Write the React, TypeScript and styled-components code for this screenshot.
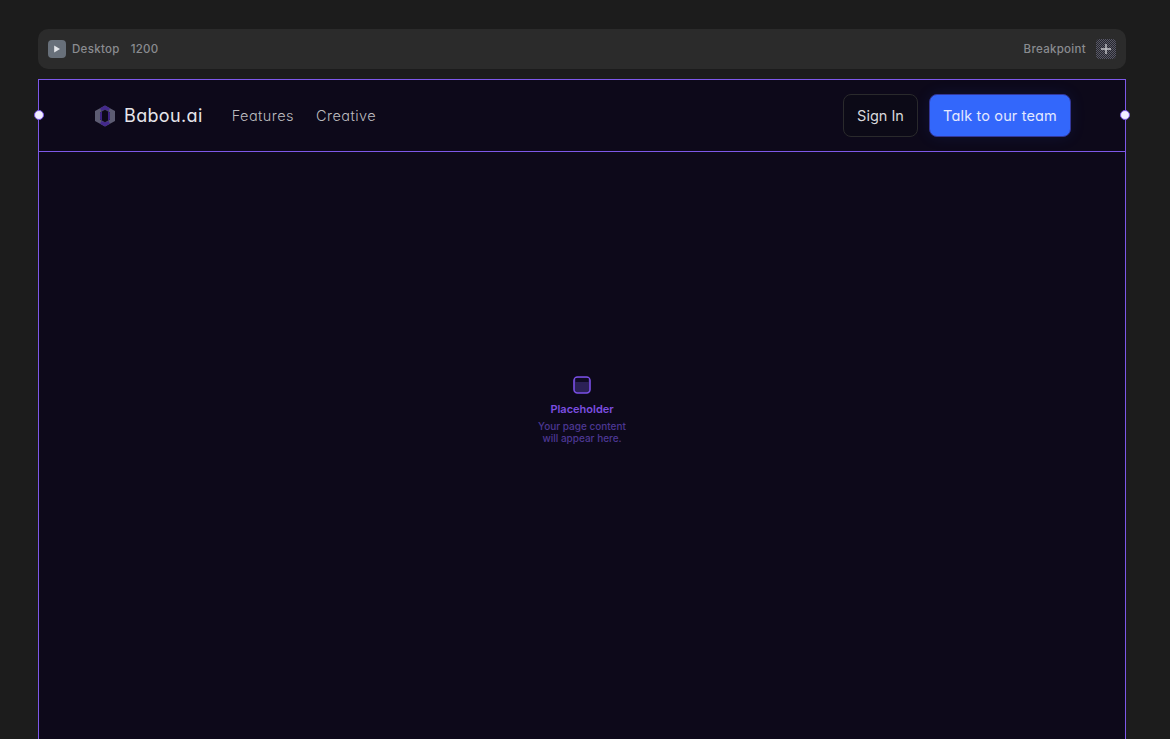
import React from 'react';
import styled, { createGlobalStyle } from 'styled-components';

const GlobalStyle = createGlobalStyle`
  html, body {
    margin: 0;
    height: 100%;
    overflow: hidden;
    background: #1c1c1c;
  }
  * {
    box-sizing: border-box;
  }
`;

const Page = styled.div`
  height: 739px;
  padding: 29px 44px 0 38px;
  display: flex;
  flex-direction: column;
  gap: 10px;
  overflow: hidden;
  font-family: Inter, 'Liberation Sans', sans-serif;
`;

const Toolbar = styled.div`
  flex: none;
  height: 40px;
  padding: 0 10px;
  display: flex;
  align-items: center;
  justify-content: space-between;
  background: #2b2b2b;
  border-radius: 10px;
`;

const ToolbarGroup = styled.div`
  display: flex;
  align-items: center;
`;

const PlayButton = styled.div`
  width: 18px;
  height: 18px;
  margin-right: 6px;
  display: flex;
  align-items: center;
  justify-content: center;
  background: #68707a;
  border-radius: 4px;
`;

const ToolbarLabel = styled.span<{ $gap?: number }>`
  margin-right: ${({ $gap }) => $gap ?? 0}px;
  font-size: 11.5px;
  font-weight: 500;
  letter-spacing: 0.3px;
  line-height: 14px;
  color: #8a8c90;
`;

const AddButton = styled.div`
  width: 20px;
  height: 20px;
  margin-left: 10px;
  display: flex;
  align-items: center;
  justify-content: center;
  border-radius: 4px;
  background: repeating-conic-gradient(#5a5a66 0 25%, #26262e 0 50%) 0 0 / 2px 2px;
`;

const Frame = styled.div`
  position: relative;
  flex: 1;
  display: flex;
  flex-direction: column;
  background: #0d091a;
  border: 1px solid #7d58e8;
  border-bottom: 0;
`;

const Handle = styled.span<{ $side: 'left' | 'right' }>`
  position: absolute;
  top: 30px;
  ${({ $side }) => ($side === 'left' ? 'left: -5.5px;' : 'right: -4.5px;')}
  width: 10px;
  height: 10px;
  background: #f1eeff;
  border: 1.5px solid #7d58e8;
  border-radius: 50%;
`;

const Nav = styled.header`
  flex: none;
  height: 72px;
  padding: 0 54px 0 55px;
  display: flex;
  align-items: center;
  justify-content: space-between;
  border-bottom: 1px solid #7d58e8;
  font-feature-settings: 'cv11' 1;
`;

const NavLeft = styled.div`
  display: flex;
  align-items: center;
`;

const Brand = styled.div`
  display: flex;
  align-items: center;
  gap: 8px;
  margin-right: 29px;
  font-size: 18px;
  font-weight: 400;
  letter-spacing: 0.35px;
  color: #e6e5ea;
`;

const NavLink = styled.a`
  margin-right: 22px;
  font-size: 14.5px;
  font-weight: 300;
  letter-spacing: 0.45px;
  color: #bcbbbf;
`;

const NavRight = styled.div`
  display: flex;
  align-items: center;
  gap: 11px;
  padding-bottom: 1px;
`;

const Button = styled.button<{ $primary?: boolean }>`
  width: ${({ $primary }) => ($primary ? 142 : 75)}px;
  height: 43px;
  padding: 0;
  font-family: Inter, 'Liberation Sans', sans-serif;
  font-feature-settings: 'cv11' 1;
  font-size: 14.5px;
  font-weight: 400;
  letter-spacing: ${({ $primary }) => ($primary ? 0.15 : 0)}px;
  color: ${({ $primary }) => ($primary ? '#e4e9ff' : '#d9d8dc')};
  background: ${({ $primary }) => ($primary ? '#3367fb' : '#0c0a17')};
  border: 1px solid ${({ $primary }) => ($primary ? '#33379a' : '#2a2a2c')};
  border-radius: 8px;
  box-shadow: ${({ $primary }) => ($primary ? '0 0 16px rgba(51, 103, 251, 0.1)' : 'none')};
`;

const Main = styled.main`
  flex: 1;
  padding-top: 224px;
  display: flex;
  flex-direction: column;
  align-items: center;
`;

const PlaceholderIcon = styled.div`
  margin-bottom: 8px;
  height: 18px;
`;

const PlaceholderTitle = styled.div`
  margin-bottom: 4px;
  font-size: 11px;
  font-weight: 600;
  line-height: 14px;
  color: #7c4ee0;
`;

const PlaceholderText = styled.div`
  font-size: 10px;
  font-weight: 500;
  line-height: 12px;
  text-align: center;
  color: #4c3792;
`;

const App: React.FC = () => {
  return (
    <>
      <GlobalStyle />
      <Page>
        <Toolbar>
          <ToolbarGroup>
            <PlayButton>
              <svg width="8" height="8" viewBox="0 0 8 8">
                <path d="M1.2 0.6 L7 4 L1.2 7.4 Z" fill="#e4e6ea" />
              </svg>
            </PlayButton>
            <ToolbarLabel $gap={11}>Desktop</ToolbarLabel>
            <ToolbarLabel>1200</ToolbarLabel>
          </ToolbarGroup>
          <ToolbarGroup>
            <ToolbarLabel>Breakpoint</ToolbarLabel>
            <AddButton>
              <svg width="12" height="12" viewBox="0 0 12 12">
                <path d="M6 1 V11 M1 6 H11" stroke="#c4c4c8" strokeWidth="1.4" />
              </svg>
            </AddButton>
          </ToolbarGroup>
        </Toolbar>
        <Frame>
          <Handle $side="left" />
          <Handle $side="right" />
          <Nav>
            <NavLeft>
              <Brand>
                <svg width="22" height="22" viewBox="0 0 22 22">
                  <path d="M11 0.5 L21 6 V16 L11 21.5 L1 16 V6 Z" fill="#5c5c72" />
                  <path d="M6 3.2 L11 0.5 L16 3.2 L14.5 6 L11 4.8 L7.5 6 Z M6 18.8 L7.5 16 L11 17.2 L14.5 16 L16 18.8 L11 21.5 Z" fill="#43298c" />
                  <path d="M11 4.8 L16 7.5 V14.5 L11 17.2 L6 14.5 V7.5 Z" fill="#0d091a" />
                  <path d="M8 6.4 V15.6 L6 14.5 V7.5 Z M14 6.4 V15.6 L16 14.5 V7.5 Z" fill="#3d2382" />
                </svg>
                Babou.ai
              </Brand>
              <NavLink>Features</NavLink>
              <NavLink>Creative</NavLink>
            </NavLeft>
            <NavRight>
              <Button>Sign In</Button>
              <Button $primary>Talk to our team</Button>
            </NavRight>
          </Nav>
          <Main>
            <PlaceholderIcon>
              <svg width="18" height="18" viewBox="0 0 18 18">
                <rect x="1" y="1" width="16" height="16" rx="3.5" fill="#2b2156" stroke="#7a4fe6" strokeWidth="1.6" />
                <path d="M2.5 2 H15.5 V6 H2.5 Z" fill="#0f0b22" />
              </svg>
            </PlaceholderIcon>
            <PlaceholderTitle>Placeholder</PlaceholderTitle>
            <PlaceholderText>
              Your page content
              <br />
              will appear here.
            </PlaceholderText>
          </Main>
        </Frame>
      </Page>
    </>
  );
};

export default App;
